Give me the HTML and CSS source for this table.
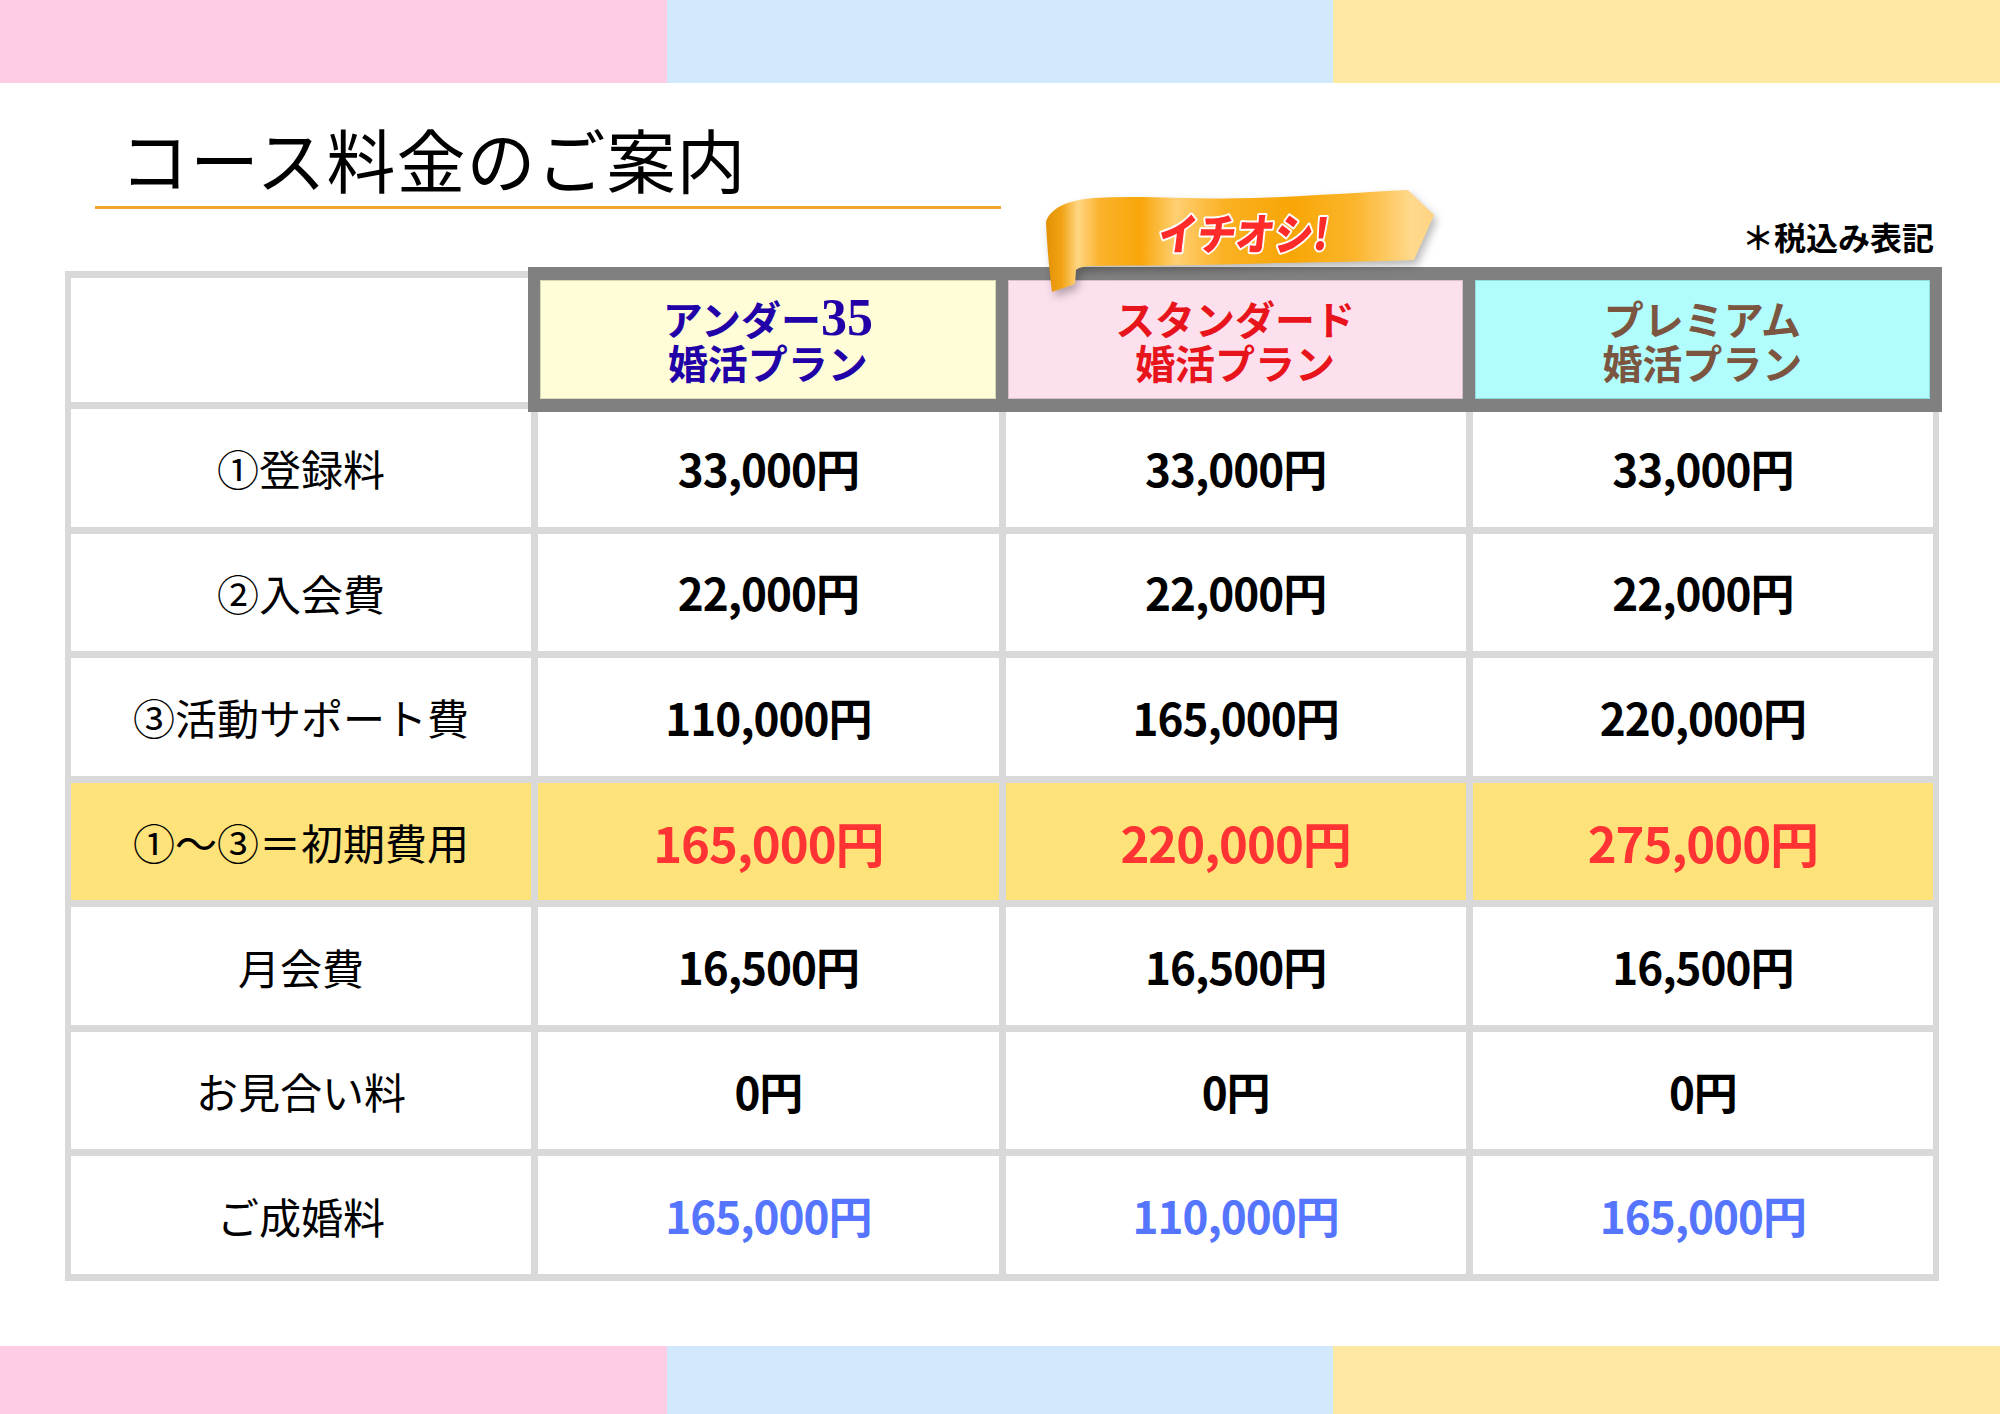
FILE: index.html
```html
<!DOCTYPE html>
<html lang="ja">
<head>
<meta charset="utf-8">
<title>コース料金のご案内</title>
<link rel="stylesheet" href="styles.css">
</head>
<body>
<div class="page">
  <div class="band band-top"><span class="c-pink"></span><span class="c-blue"></span><span class="c-yellow"></span></div>

  <main class="content">
    <h1 class="title">コース料金のご案内</h1>
    <p class="note">＊税込み表記</p>

    <div class="price-table">
      <div class="cell corner"></div>
      <div class="plans">
        <div class="plan plan-under"><span class="line">アンダー<span class="num">35</span></span><span class="line">婚活プラン</span></div>
        <div class="plan plan-standard">
          <svg class="ribbon" width="400" height="112" viewBox="0 0 400 112">
            <defs>
              <linearGradient id="gold" x1="0" y1="0" x2="400" y2="0" gradientUnits="userSpaceOnUse">
                <stop offset="0" stop-color="#e08e00"/>
                <stop offset="0.045" stop-color="#f2a416"/>
                <stop offset="0.085" stop-color="#ffd684"/>
                <stop offset="0.14" stop-color="#fbb22c"/>
                <stop offset="0.24" stop-color="#f8a608"/>
                <stop offset="0.33" stop-color="#ffcf72"/>
                <stop offset="0.45" stop-color="#fbb124"/>
                <stop offset="0.62" stop-color="#f8a605"/>
                <stop offset="0.78" stop-color="#fbb62e"/>
                <stop offset="0.92" stop-color="#ffd98e"/>
                <stop offset="1" stop-color="#ffd27a"/>
              </linearGradient>
            </defs>
            <path d="M2 34 C6 20 24 12 50 10 C100 7 150 12 210 10 C270 8 320 4 364 2 L390 27 L370 72 C320 74 260 74 200 76 C140 78 90 77 50 78 C40 78 34 80 32 82 L31 96 C24 99 15 101 8 104 C5 80 3 56 2 34 Z" fill="url(#gold)"/>
            <text class="ribbon-text" x="0" y="0" text-anchor="middle" transform="translate(198 62) skewX(-7) scale(0.9 1)">イチオシ!</text>
          </svg>
          <span class="line">スタンダード</span><span class="line">婚活プラン</span>
        </div>
        <div class="plan plan-premium"><span class="line">プレミアム</span><span class="line">婚活プラン</span></div>
      </div>

      <div class="row">
        <div class="cell label">①登録料</div>
        <div class="cell value">33,000円</div>
        <div class="cell value">33,000円</div>
        <div class="cell value">33,000円</div>
      </div>
      <div class="row">
        <div class="cell label">②入会費</div>
        <div class="cell value">22,000円</div>
        <div class="cell value">22,000円</div>
        <div class="cell value">22,000円</div>
      </div>
      <div class="row">
        <div class="cell label">③活動サポート費</div>
        <div class="cell value">110,000円</div>
        <div class="cell value">165,000円</div>
        <div class="cell value">220,000円</div>
      </div>
      <div class="row row-total">
        <div class="cell label">①〜③＝初期費用</div>
        <div class="cell value">165,000円</div>
        <div class="cell value">220,000円</div>
        <div class="cell value">275,000円</div>
      </div>
      <div class="row">
        <div class="cell label">月会費</div>
        <div class="cell value">16,500円</div>
        <div class="cell value">16,500円</div>
        <div class="cell value">16,500円</div>
      </div>
      <div class="row">
        <div class="cell label">お見合い料</div>
        <div class="cell value">0円</div>
        <div class="cell value">0円</div>
        <div class="cell value">0円</div>
      </div>
      <div class="row row-success">
        <div class="cell label">ご成婚料</div>
        <div class="cell value">165,000円</div>
        <div class="cell value">110,000円</div>
        <div class="cell value">165,000円</div>
      </div>
    </div>
  </main>

  <div class="band band-bottom"><span class="c-pink"></span><span class="c-blue"></span><span class="c-yellow"></span></div>
</div>
</body>
</html>
```

FILE: styles.css
```css
* {
  box-sizing: border-box;
  margin: 0;
  padding: 0;
}

html, body {
  margin: 0;
  background: #ffffff;
}

body {
  font-family: "Noto Sans CJK JP", "Noto Sans", sans-serif;
  color: #000000;
}

.page {
  width: 2000px;
  height: 1414px;
  display: flex;
  flex-direction: column;
}

.band {
  display: grid;
  grid-template-columns: repeat(3, 1fr);
}

.band-top {
  height: 83px;
}

.band-bottom {
  height: 68px;
  margin-top: auto;
}

.c-pink { background: #ffcce6; }
.c-blue { background: #d2e8fd; }
.c-yellow { background: #fee9a2; }

.content {
  padding: 0 61px 0 65px;
}

.title {
  margin: 27px 0 0 30px;
  width: 906px;
  height: 99px;
  padding-left: 25px;
  border-bottom: 3px solid #f2a52a;
  font-size: 69px;
  font-weight: 400;
  line-height: 96px;
  letter-spacing: 1px;
  white-space: nowrap;
}

.note {
  margin-top: 7px;
  padding-right: 5px;
  text-align: right;
  font-size: 32px;
  font-weight: 700;
  line-height: 40px;
}

.price-table {
  margin-top: 15px;
  height: 1010px;
  display: grid;
  grid-template-columns: repeat(4, 1fr);
  grid-template-rows: 124px repeat(7, 1fr);
  gap: 7px;
  padding: 7px 6px;
  background: #d9d9d9;
}

.row {
  display: contents;
}

.cell {
  background: #ffffff;
  display: flex;
  align-items: center;
  justify-content: center;
  white-space: nowrap;
}

.label {
  font-size: 42px;
  font-weight: 400;
}

.value {
  font-size: 44px;
  font-weight: 700;
  letter-spacing: -1px;
}

.row-total .cell {
  background: #fee27a;
}

.row-total .value {
  color: #ff3333;
  font-size: 49px;
}

.row-success .value {
  color: #5575ff;
}

.plans {
  grid-column: 2 / 5;
  margin: -11px -9px -10px -10px;
  padding: 13px 12px;
  background: #808080;
  display: grid;
  grid-template-columns: repeat(3, 1fr);
  gap: 12px;
  position: relative;
  z-index: 1;
}

.plan {
  position: relative;
  display: flex;
  flex-direction: column;
  align-items: center;
  justify-content: center;
  border: 1px solid;
  font-size: 40px;
  font-weight: 700;
  line-height: 44px;
  white-space: nowrap;
}

.line {
  display: block;
  height: 44px;
}

.plan-under {
  background: #fefdd8;
  border-color: #d8d6b4;
  color: #2200a8;
}

.plan-standard {
  background: #fde0ee;
  border-color: #d9bfcb;
  color: #e8141c;
}

.plan-premium {
  background: #b1fcfc;
  border-color: #8edede;
  color: #7b5540;
}

.num {
  font-family: "Liberation Serif", serif;
  font-weight: 700;
  font-size: 52px;
  line-height: 44px;
}

.ribbon {
  position: absolute;
  left: 35px;
  top: -93px;
  overflow: visible;
  filter: drop-shadow(3px 5px 4px rgba(0, 0, 0, 0.28));
}

.ribbon-text {
  font-family: "Noto Sans CJK JP", sans-serif;
  font-size: 43px;
  font-weight: 900;
  fill: #ff2a2a;
  stroke: #ffffff;
  stroke-width: 4px;
  paint-order: stroke;
  stroke-linejoin: round;
}
```
